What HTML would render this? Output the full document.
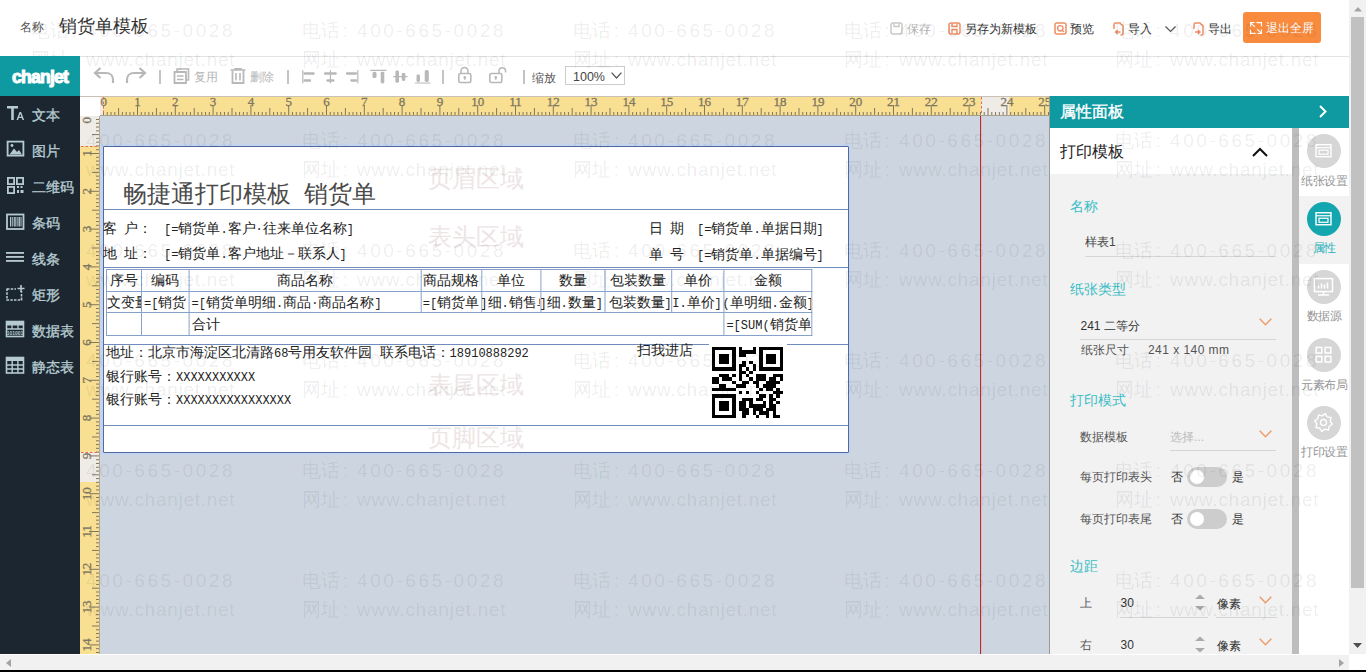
<!DOCTYPE html><html><head><meta charset="utf-8"><style>
*{margin:0;padding:0;box-sizing:border-box}
html,body{width:1366px;height:672px;overflow:hidden;background:#fff;font-family:"Liberation Sans",sans-serif}
.a{position:absolute}
.t{position:absolute;white-space:nowrap}
svg{position:absolute;display:block;overflow:visible}
.doc{font-family:"Liberation Sans",sans-serif}
.m{font-family:"Liberation Mono",monospace;font-size:12px;letter-spacing:0px}
.wm{z-index:5;position:absolute;white-space:nowrap;font-size:19px;line-height:20px;color:rgba(0,0,0,0.08);pointer-events:none;-webkit-text-stroke:0.6px rgba(0,0,0,0.035)}
.wd{letter-spacing:2.55px}.ww{letter-spacing:0.73px}
</style></head><body>
<div class="t" style="left:20px;top:19.0px;font-size:12px;line-height:16px;color:#555;">名称</div>
<div class="t" style="left:59px;top:14.0px;font-size:18px;line-height:24px;color:#333;">销货单模板</div>
<div class="a" style="left:80px;top:56px;width:1269px;height:1px;background:#e3e3e3"></div>
<svg style="left:889.5px;top:22px" width="13" height="13" viewBox="0 0 13 13"><rect x="1" y="1" width="11" height="11" rx="2" fill="none" stroke="#c8c8c8" stroke-width="1.5"/><path d="M4,1.5v3h5v-3" fill="none" stroke="#c8c8c8" stroke-width="1.4"/></svg>
<div class="t" style="left:906.5px;top:20.5px;font-size:12px;line-height:16px;color:#b9b9b9;">保存</div>
<svg style="left:947.5px;top:22px" width="13" height="13" viewBox="0 0 13 13"><rect x="1" y="1" width="11" height="11" rx="2" fill="none" stroke="#ee8f66" stroke-width="1.5"/><path d="M4,1.5v3h5v-3M4,11.5v-4h5v4" fill="none" stroke="#ee8f66" stroke-width="1.4"/></svg>
<div class="t" style="left:964.5px;top:20.5px;font-size:12px;line-height:16px;color:#333;">另存为新模板</div>
<svg style="left:1053.5px;top:22px" width="13" height="13" viewBox="0 0 13 13"><rect x="1" y="1" width="11" height="11" rx="2" fill="none" stroke="#ee8f66" stroke-width="1.5"/><circle cx="6.3" cy="6.3" r="2.7" fill="none" stroke="#ee8f66" stroke-width="1.4"/><path d="M8.2,8.2l1.8,1.8" stroke="#ee8f66" stroke-width="1.4"/></svg>
<div class="t" style="left:1070px;top:20.5px;font-size:12px;line-height:16px;color:#333;">预览</div>
<svg style="left:1111.5px;top:21.5px" width="13" height="14" viewBox="0 0 13 14"><path d="M2,7v-4.5a1.5,1.5 0 0 1 1.5,-1.5h4.5l3,3v7.5a1.5,1.5 0 0 1 -1.5,1.5h-1" fill="none" stroke="#ee8f66" stroke-width="1.5"/><path d="M8.5,10h-5M5.5,8l-2,2l2,2" fill="none" stroke="#ee8f66" stroke-width="1.4"/></svg>
<div class="t" style="left:1128px;top:20.5px;font-size:12px;line-height:16px;color:#333;">导入</div>
<svg style="left:1165px;top:26px" width="11" height="6" viewBox="0 0 11 6"><path d="M0.5,0.5l5,5l5,-5" fill="none" stroke="#555" stroke-width="1.2"/></svg>
<svg style="left:1191.5px;top:21.5px" width="13" height="14" viewBox="0 0 13 14"><path d="M2,7v-4.5a1.5,1.5 0 0 1 1.5,-1.5h4.5l3,3v7.5a1.5,1.5 0 0 1 -1.5,1.5h-1" fill="none" stroke="#ee8f66" stroke-width="1.5"/><path d="M3,10h5M6,8l2,2l-2,2" fill="none" stroke="#ee8f66" stroke-width="1.4"/></svg>
<div class="t" style="left:1208px;top:20.5px;font-size:12px;line-height:16px;color:#333;">导出</div>
<div class="a" style="left:1243px;top:12px;width:78px;height:31px;background:#f98b3e;border-radius:3px"></div>
<svg style="left:1250px;top:22px" width="12" height="12" viewBox="0 0 12 12"><path d="M0.6,4.5v-4h4M11.4,7.5v4h-4M0.8,0.8l4,4M11.2,11.2l-4,-4M6.5,0.6h5v4M5.5,11.4h-5v-4" fill="none" stroke="#fff" stroke-width="1.2"/></svg>
<div class="t" style="left:1265.5px;top:20.0px;font-size:12px;line-height:16px;color:#fff;">退出全屏</div>
<div class="a" style="left:1349px;top:0;width:17px;height:654px;background:#f1f1f1"></div>
<div class="a" style="left:1351px;top:17px;width:13px;height:571px;background:#c1c1c1"></div>
<svg style="left:1353.5px;top:6.5px" width="8" height="5" viewBox="0 0 8 5"><path d="M0,4.5L4,0L8,4.5z" fill="#a3a3a3"/></svg>
<svg style="left:1353px;top:643px" width="9" height="5" viewBox="0 0 9 5"><path d="M0,0L4.5,5L9,0z" fill="#505050"/></svg>
<div class="a" style="left:0;top:654px;width:1349px;height:18px;background:#f1f1f1;border-top:1px solid #fff"></div>
<div class="a" style="left:1349px;top:654px;width:17px;height:18px;background:#fff"></div>
<svg style="left:6px;top:659px" width="5" height="8" viewBox="0 0 5 8"><path d="M5,0L0,4L5,8z" fill="#a3a3a3"/></svg>
<svg style="left:1339px;top:659px" width="5" height="8" viewBox="0 0 5 8"><path d="M0,0L5,4L0,8z" fill="#a3a3a3"/></svg>
<div class="a" style="left:0;top:670px;width:1366px;height:2px;background:#000"></div>
<div class="a" style="left:0;top:56px;width:80px;height:40px;background:#0f99a1;z-index:10"></div>
<div class="t" style="left:11.5px;top:66px;font-size:22px;line-height:26px;color:#fff;font-weight:bold;letter-spacing:-1px;-webkit-text-stroke:1.3px #fff;transform:scale(0.8,0.86);transform-origin:0 0;z-index:11">chanjet</div>
<svg style="left:93px;top:67px" width="22" height="17" viewBox="0 0 22 17"><path d="M20,16v-3.5c0,-4 -3,-6.5 -7,-6.5h-10.5" fill="none" stroke="#b8b8b8" stroke-width="2.2"/><path d="M7.5,1l-5.5,5l5.5,5" fill="none" stroke="#b8b8b8" stroke-width="2.2"/></svg>
<svg style="left:125px;top:67px" width="22" height="17" viewBox="0 0 22 17"><path d="M2,16v-3.5c0,-4 3,-6.5 7,-6.5h10.5" fill="none" stroke="#b8b8b8" stroke-width="2.2"/><path d="M14.5,1l5.5,5l-5.5,5" fill="none" stroke="#b8b8b8" stroke-width="2.2"/></svg>
<div class="a" style="left:159px;top:70px;width:2px;height:14px;background:#c4c4c4"></div>
<svg style="left:173px;top:68px" width="17" height="16" viewBox="0 0 17 16"><path d="M4,3.2v-2.2h11.5v11h-2.5" fill="none" stroke="#b8b8b8" stroke-width="1.6"/><path d="M1.5,4h11.5v11h-11.5z" fill="none" stroke="#b8b8b8" stroke-width="1.8"/><path d="M4,8h6.5M4,11.5h6.5" stroke="#b8b8b8" stroke-width="1.6"/></svg>
<div class="t" style="left:194px;top:68.5px;font-size:12px;line-height:16px;color:#b5b5b5;">复用</div>
<svg style="left:230px;top:68px" width="16" height="16" viewBox="0 0 16 16"><path d="M0.5,2h15M5,2v-1.2h6v1.2" fill="none" stroke="#b8b8b8" stroke-width="1.6"/><path d="M2.5,2.5v12.5h11v-12.5" fill="none" stroke="#b8b8b8" stroke-width="1.8"/><path d="M6,5v7.5M10,5v7.5" stroke="#b8b8b8" stroke-width="1.6"/></svg>
<div class="t" style="left:250px;top:68.5px;font-size:12px;line-height:16px;color:#b5b5b5;">删除</div>
<div class="a" style="left:287px;top:70px;width:2px;height:14px;background:#c4c4c4"></div>
<svg style="left:300px;top:68px" width="140" height="18" viewBox="300 68 140 18"><rect x="302.2" y="70" width="1.2" height="13.5" rx="0.48" fill="#b8b8b8"/><rect x="303.5" y="72.2" width="11.2" height="2.6" rx="1.04" fill="#b8b8b8"/><rect x="303.5" y="79.2" width="7.6" height="2.6" rx="1.04" fill="#b8b8b8"/><rect x="329.8" y="70" width="1.2" height="13.5" rx="0.48" fill="#b8b8b8"/><rect x="324" y="72.2" width="12.8" height="2.6" rx="1.04" fill="#b8b8b8"/><rect x="326.3" y="79.2" width="8.2" height="2.6" rx="1.04" fill="#b8b8b8"/><rect x="357.2" y="70" width="1.2" height="13.5" rx="0.48" fill="#b8b8b8"/><rect x="346" y="72.2" width="11" height="2.6" rx="1.04" fill="#b8b8b8"/><rect x="350.3" y="79.2" width="6.8" height="2.6" rx="1.04" fill="#b8b8b8"/><rect x="370" y="69.8" width="16.6" height="1.2" rx="0.48" fill="#b8b8b8"/><rect x="372.5" y="71.8" width="4" height="6.2" rx="1.60" fill="#b8b8b8"/><rect x="380.7" y="71.8" width="3.6" height="11.6" rx="1.44" fill="#b8b8b8"/><rect x="393" y="76" width="14.7" height="1.2" rx="0.48" fill="#b8b8b8"/><rect x="395.4" y="70.5" width="3.6" height="12.3" rx="1.44" fill="#b8b8b8"/><rect x="401.8" y="72.9" width="3.5" height="8.1" rx="1.40" fill="#b8b8b8"/><rect x="414.7" y="82.4" width="15.8" height="1.2" rx="0.48" fill="#b8b8b8"/><rect x="416.5" y="74.6" width="3.5" height="7.4" rx="1.40" fill="#b8b8b8"/><rect x="424.7" y="70" width="4.1" height="12" rx="1.64" fill="#b8b8b8"/></svg>
<div class="a" style="left:442px;top:70px;width:2px;height:14px;background:#c4c4c4"></div>
<svg style="left:457px;top:67px" width="17" height="17" viewBox="0 0 17 17"><path d="M4,6.5v-2.5a3.5,3.5 0 0 1 7,0v2.5" fill="none" stroke="#b8b8b8" stroke-width="1.5"/><rect x="1.8" y="6.5" width="12" height="9" rx="1.5" fill="none" stroke="#b8b8b8" stroke-width="1.6"/><circle cx="7.8" cy="10.3" r="1.3" fill="#b8b8b8"/><rect x="7.1" y="10.3" width="1.4" height="2.5" fill="#b8b8b8"/></svg>
<svg style="left:488px;top:67px" width="20" height="17" viewBox="0 0 20 17"><path d="M11,6.5v-2.5a3.3,3.3 0 0 1 6.6,0v1.5" fill="none" stroke="#b8b8b8" stroke-width="1.5"/><rect x="1.8" y="6.5" width="12" height="9" rx="1.5" fill="none" stroke="#b8b8b8" stroke-width="1.6"/><circle cx="7.8" cy="10.3" r="1.3" fill="#b8b8b8"/><rect x="7.1" y="10.3" width="1.4" height="2.5" fill="#b8b8b8"/></svg>
<div class="a" style="left:523px;top:70px;width:2px;height:14px;background:#c4c4c4"></div>
<div class="t" style="left:531.5px;top:69.5px;font-size:12px;line-height:16px;color:#555;">缩放</div>
<div class="a" style="left:565px;top:66px;width:60px;height:19px;border:1px solid #ccc;background:#fff"></div>
<div class="t" style="left:573px;top:69.3px;font-size:12px;line-height:16px;color:#444;font-size:12.5px">100%</div>
<svg style="left:611px;top:72px" width="11" height="7" viewBox="0 0 11 7"><path d="M0.6,0.6l4.9,5.4l4.9,-5.4" fill="none" stroke="#555" stroke-width="1.3"/></svg>
<div class="a" style="left:0;top:0;width:0;height:0;z-index:10">
<div class="a" style="left:0;top:96px;width:80px;height:558px;background:#1b2631"></div>
<div class="t" style="left:32px;top:106.0px;font-size:14px;line-height:18px;color:#b6cbd0;-webkit-text-stroke:0.35px #b6cbd0">文本</div>
<div class="t" style="left:32px;top:142.0px;font-size:14px;line-height:18px;color:#b6cbd0;-webkit-text-stroke:0.35px #b6cbd0">图片</div>
<div class="t" style="left:32px;top:178.0px;font-size:14px;line-height:18px;color:#b6cbd0;-webkit-text-stroke:0.35px #b6cbd0">二维码</div>
<div class="t" style="left:32px;top:214.0px;font-size:14px;line-height:18px;color:#b6cbd0;-webkit-text-stroke:0.35px #b6cbd0">条码</div>
<div class="t" style="left:32px;top:250.0px;font-size:14px;line-height:18px;color:#b6cbd0;-webkit-text-stroke:0.35px #b6cbd0">线条</div>
<div class="t" style="left:32px;top:286.0px;font-size:14px;line-height:18px;color:#b6cbd0;-webkit-text-stroke:0.35px #b6cbd0">矩形</div>
<div class="t" style="left:32px;top:322.0px;font-size:14px;line-height:18px;color:#b6cbd0;-webkit-text-stroke:0.35px #b6cbd0">数据表</div>
<div class="t" style="left:32px;top:358.0px;font-size:14px;line-height:18px;color:#b6cbd0;-webkit-text-stroke:0.35px #b6cbd0">静态表</div>
<svg style="left:0;top:0" width="30" height="400" viewBox="0 0 30 400"><path d="M7,106h11v2.6h-4.2v11.4h-2.6v-11.4h-4.2z" fill="#b6cbd0"/><path d="M16.5,120l3,-8h1.6l3,8h-1.6l-0.7,-2h-3l-0.7,2z M19.2,116.7h2.2l-1.1,-3z" fill="#b6cbd0" fill-rule="evenodd"/><rect x="7.6" y="141.6" width="15.8" height="14" fill="none" stroke="#b6cbd0" stroke-width="1.8"/><path d="M9.5,154.5l4.5,-6l3,3.5l2,-2l3,4.5z" fill="#b6cbd0"/><circle cx="12" cy="145.5" r="1.4" fill="#b6cbd0"/><rect x="7.9" y="177.9" width="6.2" height="6.2" fill="none" stroke="#b6cbd0" stroke-width="1.8"/><rect x="16.9" y="177.9" width="6.2" height="6.2" fill="none" stroke="#b6cbd0" stroke-width="1.8"/><rect x="7.9" y="186.9" width="6.2" height="6.2" fill="none" stroke="#b6cbd0" stroke-width="1.8"/><rect x="17" y="186" width="2" height="2" fill="#b6cbd0"/><rect x="20.5" y="186" width="2" height="2" fill="#b6cbd0"/><rect x="17" y="190" width="2" height="3" fill="#b6cbd0"/><rect x="20.5" y="190" width="3" height="3" fill="#b6cbd0"/><rect x="7" y="214.5" width="16.5" height="14.5" fill="none" stroke="#b6cbd0" stroke-width="1.8"/><rect x="10" y="217" width="1.3" height="9.5" fill="#b6cbd0"/><rect x="12.3" y="217" width="1" height="9.5" fill="#b6cbd0"/><rect x="14.2" y="217" width="1.5" height="9.5" fill="#b6cbd0"/><rect x="16.6" y="217" width="1" height="9.5" fill="#b6cbd0"/><rect x="18.5" y="217" width="1.4" height="9.5" fill="#b6cbd0"/><rect x="20.5" y="217" width="1" height="9.5" fill="#b6cbd0"/><rect x="6" y="252" width="18" height="1.8" fill="#b6cbd0"/><rect x="6" y="256" width="18" height="1.8" fill="#b6cbd0"/><rect x="6" y="260" width="18" height="1.8" fill="#b6cbd0"/><path d="M7,288.5v11.5h14.5v-9" fill="none" stroke="#b6cbd0" stroke-width="1.6" stroke-dasharray="2.5,1.2"/><path d="M7,289h9" fill="none" stroke="#b6cbd0" stroke-width="1.6" stroke-dasharray="2.5,1.2"/><path d="M21,285v7M17.5,288.5h7" stroke="#b6cbd0" stroke-width="1.6"/><rect x="6.5" y="321.5" width="17" height="15" fill="none" stroke="#b6cbd0" stroke-width="1.6"/><rect x="6.5" y="321.5" width="17" height="4" fill="#b6cbd0"/><path d="M6.5,329h17M12,325v4M18,325v4" stroke="#b6cbd0" stroke-width="1.3"/><text x="15" y="335.3" font-size="5" font-family="Liberation Sans" fill="#b6cbd0" text-anchor="middle" font-weight="bold">101001</text><rect x="6.5" y="357.5" width="17" height="15.5" fill="none" stroke="#b6cbd0" stroke-width="1.6"/><rect x="6.5" y="357.5" width="17" height="3.5" fill="#b6cbd0"/><path d="M6.5,365h17M6.5,369h17M12.2,361v12M17.9,361v12" stroke="#b6cbd0" stroke-width="1.4"/></svg>
</div>
<div class="a" style="left:100px;top:116px;width:949px;height:538px;background:#cdd6e0"></div>
<svg width="969" height="20" style="position:absolute;left:80px;top:96px;display:block">
<rect x="0" y="0" width="969" height="20" fill="#fff"/>
<rect x="20" y="0" width="3" height="20" fill="#efebe6"/>
<rect x="23" y="0" width="878" height="20" fill="#f9df92"/>
<rect x="901" y="0" width="28" height="20" fill="#efebe6"/>
<rect x="929" y="0" width="40" height="20" fill="#f9df92"/>
<rect x="0" y="0" width="969" height="1" fill="#c9c2b4"/>
<rect x="20" y="19" width="949" height="1" fill="#a89f89"/>
<rect x="19.20" y="19" width="1" height="0" fill="#80775f"/>
<text x="23.70" y="10" font-family="Liberation Serif" font-size="13" fill="#80775f" stroke="#80775f" stroke-width="0.3" text-anchor="middle">0</text>
<rect x="22.98" y="16" width="1" height="3" fill="#80775f"/>
<rect x="26.76" y="16" width="1" height="3" fill="#80775f"/>
<rect x="30.54" y="16" width="1" height="3" fill="#80775f"/>
<rect x="34.32" y="16" width="1" height="3" fill="#80775f"/>
<rect x="38.10" y="12" width="1" height="7" fill="#80775f"/>
<rect x="41.88" y="16" width="1" height="3" fill="#80775f"/>
<rect x="45.66" y="16" width="1" height="3" fill="#80775f"/>
<rect x="49.44" y="16" width="1" height="3" fill="#80775f"/>
<rect x="53.22" y="16" width="1" height="3" fill="#80775f"/>
<rect x="57.00" y="9" width="1" height="10" fill="#80775f"/>
<text x="57.50" y="10" font-family="Liberation Serif" font-size="13" fill="#80775f" stroke="#80775f" stroke-width="0.3" text-anchor="middle">1</text>
<rect x="60.78" y="16" width="1" height="3" fill="#80775f"/>
<rect x="64.56" y="16" width="1" height="3" fill="#80775f"/>
<rect x="68.34" y="16" width="1" height="3" fill="#80775f"/>
<rect x="72.12" y="16" width="1" height="3" fill="#80775f"/>
<rect x="75.90" y="12" width="1" height="7" fill="#80775f"/>
<rect x="79.68" y="16" width="1" height="3" fill="#80775f"/>
<rect x="83.46" y="16" width="1" height="3" fill="#80775f"/>
<rect x="87.24" y="16" width="1" height="3" fill="#80775f"/>
<rect x="91.02" y="16" width="1" height="3" fill="#80775f"/>
<rect x="94.80" y="9" width="1" height="10" fill="#80775f"/>
<text x="95.30" y="10" font-family="Liberation Serif" font-size="13" fill="#80775f" stroke="#80775f" stroke-width="0.3" text-anchor="middle">2</text>
<rect x="98.58" y="16" width="1" height="3" fill="#80775f"/>
<rect x="102.36" y="16" width="1" height="3" fill="#80775f"/>
<rect x="106.14" y="16" width="1" height="3" fill="#80775f"/>
<rect x="109.92" y="16" width="1" height="3" fill="#80775f"/>
<rect x="113.70" y="12" width="1" height="7" fill="#80775f"/>
<rect x="117.48" y="16" width="1" height="3" fill="#80775f"/>
<rect x="121.26" y="16" width="1" height="3" fill="#80775f"/>
<rect x="125.04" y="16" width="1" height="3" fill="#80775f"/>
<rect x="128.82" y="16" width="1" height="3" fill="#80775f"/>
<rect x="132.60" y="9" width="1" height="10" fill="#80775f"/>
<text x="133.10" y="10" font-family="Liberation Serif" font-size="13" fill="#80775f" stroke="#80775f" stroke-width="0.3" text-anchor="middle">3</text>
<rect x="136.38" y="16" width="1" height="3" fill="#80775f"/>
<rect x="140.16" y="16" width="1" height="3" fill="#80775f"/>
<rect x="143.94" y="16" width="1" height="3" fill="#80775f"/>
<rect x="147.72" y="16" width="1" height="3" fill="#80775f"/>
<rect x="151.50" y="12" width="1" height="7" fill="#80775f"/>
<rect x="155.28" y="16" width="1" height="3" fill="#80775f"/>
<rect x="159.06" y="16" width="1" height="3" fill="#80775f"/>
<rect x="162.84" y="16" width="1" height="3" fill="#80775f"/>
<rect x="166.62" y="16" width="1" height="3" fill="#80775f"/>
<rect x="170.40" y="9" width="1" height="10" fill="#80775f"/>
<text x="170.90" y="10" font-family="Liberation Serif" font-size="13" fill="#80775f" stroke="#80775f" stroke-width="0.3" text-anchor="middle">4</text>
<rect x="174.18" y="16" width="1" height="3" fill="#80775f"/>
<rect x="177.96" y="16" width="1" height="3" fill="#80775f"/>
<rect x="181.74" y="16" width="1" height="3" fill="#80775f"/>
<rect x="185.52" y="16" width="1" height="3" fill="#80775f"/>
<rect x="189.30" y="12" width="1" height="7" fill="#80775f"/>
<rect x="193.08" y="16" width="1" height="3" fill="#80775f"/>
<rect x="196.86" y="16" width="1" height="3" fill="#80775f"/>
<rect x="200.64" y="16" width="1" height="3" fill="#80775f"/>
<rect x="204.42" y="16" width="1" height="3" fill="#80775f"/>
<rect x="208.20" y="9" width="1" height="10" fill="#80775f"/>
<text x="208.70" y="10" font-family="Liberation Serif" font-size="13" fill="#80775f" stroke="#80775f" stroke-width="0.3" text-anchor="middle">5</text>
<rect x="211.98" y="16" width="1" height="3" fill="#80775f"/>
<rect x="215.76" y="16" width="1" height="3" fill="#80775f"/>
<rect x="219.54" y="16" width="1" height="3" fill="#80775f"/>
<rect x="223.32" y="16" width="1" height="3" fill="#80775f"/>
<rect x="227.10" y="12" width="1" height="7" fill="#80775f"/>
<rect x="230.88" y="16" width="1" height="3" fill="#80775f"/>
<rect x="234.66" y="16" width="1" height="3" fill="#80775f"/>
<rect x="238.44" y="16" width="1" height="3" fill="#80775f"/>
<rect x="242.22" y="16" width="1" height="3" fill="#80775f"/>
<rect x="246.00" y="9" width="1" height="10" fill="#80775f"/>
<text x="246.50" y="10" font-family="Liberation Serif" font-size="13" fill="#80775f" stroke="#80775f" stroke-width="0.3" text-anchor="middle">6</text>
<rect x="249.78" y="16" width="1" height="3" fill="#80775f"/>
<rect x="253.56" y="16" width="1" height="3" fill="#80775f"/>
<rect x="257.34" y="16" width="1" height="3" fill="#80775f"/>
<rect x="261.12" y="16" width="1" height="3" fill="#80775f"/>
<rect x="264.90" y="12" width="1" height="7" fill="#80775f"/>
<rect x="268.68" y="16" width="1" height="3" fill="#80775f"/>
<rect x="272.46" y="16" width="1" height="3" fill="#80775f"/>
<rect x="276.24" y="16" width="1" height="3" fill="#80775f"/>
<rect x="280.02" y="16" width="1" height="3" fill="#80775f"/>
<rect x="283.80" y="9" width="1" height="10" fill="#80775f"/>
<text x="284.30" y="10" font-family="Liberation Serif" font-size="13" fill="#80775f" stroke="#80775f" stroke-width="0.3" text-anchor="middle">7</text>
<rect x="287.58" y="16" width="1" height="3" fill="#80775f"/>
<rect x="291.36" y="16" width="1" height="3" fill="#80775f"/>
<rect x="295.14" y="16" width="1" height="3" fill="#80775f"/>
<rect x="298.92" y="16" width="1" height="3" fill="#80775f"/>
<rect x="302.70" y="12" width="1" height="7" fill="#80775f"/>
<rect x="306.48" y="16" width="1" height="3" fill="#80775f"/>
<rect x="310.26" y="16" width="1" height="3" fill="#80775f"/>
<rect x="314.04" y="16" width="1" height="3" fill="#80775f"/>
<rect x="317.82" y="16" width="1" height="3" fill="#80775f"/>
<rect x="321.60" y="9" width="1" height="10" fill="#80775f"/>
<text x="322.10" y="10" font-family="Liberation Serif" font-size="13" fill="#80775f" stroke="#80775f" stroke-width="0.3" text-anchor="middle">8</text>
<rect x="325.38" y="16" width="1" height="3" fill="#80775f"/>
<rect x="329.16" y="16" width="1" height="3" fill="#80775f"/>
<rect x="332.94" y="16" width="1" height="3" fill="#80775f"/>
<rect x="336.72" y="16" width="1" height="3" fill="#80775f"/>
<rect x="340.50" y="12" width="1" height="7" fill="#80775f"/>
<rect x="344.28" y="16" width="1" height="3" fill="#80775f"/>
<rect x="348.06" y="16" width="1" height="3" fill="#80775f"/>
<rect x="351.84" y="16" width="1" height="3" fill="#80775f"/>
<rect x="355.62" y="16" width="1" height="3" fill="#80775f"/>
<rect x="359.40" y="9" width="1" height="10" fill="#80775f"/>
<text x="359.90" y="10" font-family="Liberation Serif" font-size="13" fill="#80775f" stroke="#80775f" stroke-width="0.3" text-anchor="middle">9</text>
<rect x="363.18" y="16" width="1" height="3" fill="#80775f"/>
<rect x="366.96" y="16" width="1" height="3" fill="#80775f"/>
<rect x="370.74" y="16" width="1" height="3" fill="#80775f"/>
<rect x="374.52" y="16" width="1" height="3" fill="#80775f"/>
<rect x="378.30" y="12" width="1" height="7" fill="#80775f"/>
<rect x="382.08" y="16" width="1" height="3" fill="#80775f"/>
<rect x="385.86" y="16" width="1" height="3" fill="#80775f"/>
<rect x="389.64" y="16" width="1" height="3" fill="#80775f"/>
<rect x="393.42" y="16" width="1" height="3" fill="#80775f"/>
<rect x="397.20" y="9" width="1" height="10" fill="#80775f"/>
<text x="397.70" y="10" font-family="Liberation Serif" font-size="13" fill="#80775f" stroke="#80775f" stroke-width="0.3" text-anchor="middle">10</text>
<rect x="400.98" y="16" width="1" height="3" fill="#80775f"/>
<rect x="404.76" y="16" width="1" height="3" fill="#80775f"/>
<rect x="408.54" y="16" width="1" height="3" fill="#80775f"/>
<rect x="412.32" y="16" width="1" height="3" fill="#80775f"/>
<rect x="416.10" y="12" width="1" height="7" fill="#80775f"/>
<rect x="419.88" y="16" width="1" height="3" fill="#80775f"/>
<rect x="423.66" y="16" width="1" height="3" fill="#80775f"/>
<rect x="427.44" y="16" width="1" height="3" fill="#80775f"/>
<rect x="431.22" y="16" width="1" height="3" fill="#80775f"/>
<rect x="435.00" y="9" width="1" height="10" fill="#80775f"/>
<text x="435.50" y="10" font-family="Liberation Serif" font-size="13" fill="#80775f" stroke="#80775f" stroke-width="0.3" text-anchor="middle">11</text>
<rect x="438.78" y="16" width="1" height="3" fill="#80775f"/>
<rect x="442.56" y="16" width="1" height="3" fill="#80775f"/>
<rect x="446.34" y="16" width="1" height="3" fill="#80775f"/>
<rect x="450.12" y="16" width="1" height="3" fill="#80775f"/>
<rect x="453.90" y="12" width="1" height="7" fill="#80775f"/>
<rect x="457.68" y="16" width="1" height="3" fill="#80775f"/>
<rect x="461.46" y="16" width="1" height="3" fill="#80775f"/>
<rect x="465.24" y="16" width="1" height="3" fill="#80775f"/>
<rect x="469.02" y="16" width="1" height="3" fill="#80775f"/>
<rect x="472.80" y="9" width="1" height="10" fill="#80775f"/>
<text x="473.30" y="10" font-family="Liberation Serif" font-size="13" fill="#80775f" stroke="#80775f" stroke-width="0.3" text-anchor="middle">12</text>
<rect x="476.58" y="16" width="1" height="3" fill="#80775f"/>
<rect x="480.36" y="16" width="1" height="3" fill="#80775f"/>
<rect x="484.14" y="16" width="1" height="3" fill="#80775f"/>
<rect x="487.92" y="16" width="1" height="3" fill="#80775f"/>
<rect x="491.70" y="12" width="1" height="7" fill="#80775f"/>
<rect x="495.48" y="16" width="1" height="3" fill="#80775f"/>
<rect x="499.26" y="16" width="1" height="3" fill="#80775f"/>
<rect x="503.04" y="16" width="1" height="3" fill="#80775f"/>
<rect x="506.82" y="16" width="1" height="3" fill="#80775f"/>
<rect x="510.60" y="9" width="1" height="10" fill="#80775f"/>
<text x="511.10" y="10" font-family="Liberation Serif" font-size="13" fill="#80775f" stroke="#80775f" stroke-width="0.3" text-anchor="middle">13</text>
<rect x="514.38" y="16" width="1" height="3" fill="#80775f"/>
<rect x="518.16" y="16" width="1" height="3" fill="#80775f"/>
<rect x="521.94" y="16" width="1" height="3" fill="#80775f"/>
<rect x="525.72" y="16" width="1" height="3" fill="#80775f"/>
<rect x="529.50" y="12" width="1" height="7" fill="#80775f"/>
<rect x="533.28" y="16" width="1" height="3" fill="#80775f"/>
<rect x="537.06" y="16" width="1" height="3" fill="#80775f"/>
<rect x="540.84" y="16" width="1" height="3" fill="#80775f"/>
<rect x="544.62" y="16" width="1" height="3" fill="#80775f"/>
<rect x="548.40" y="9" width="1" height="10" fill="#80775f"/>
<text x="548.90" y="10" font-family="Liberation Serif" font-size="13" fill="#80775f" stroke="#80775f" stroke-width="0.3" text-anchor="middle">14</text>
<rect x="552.18" y="16" width="1" height="3" fill="#80775f"/>
<rect x="555.96" y="16" width="1" height="3" fill="#80775f"/>
<rect x="559.74" y="16" width="1" height="3" fill="#80775f"/>
<rect x="563.52" y="16" width="1" height="3" fill="#80775f"/>
<rect x="567.30" y="12" width="1" height="7" fill="#80775f"/>
<rect x="571.08" y="16" width="1" height="3" fill="#80775f"/>
<rect x="574.86" y="16" width="1" height="3" fill="#80775f"/>
<rect x="578.64" y="16" width="1" height="3" fill="#80775f"/>
<rect x="582.42" y="16" width="1" height="3" fill="#80775f"/>
<rect x="586.20" y="9" width="1" height="10" fill="#80775f"/>
<text x="586.70" y="10" font-family="Liberation Serif" font-size="13" fill="#80775f" stroke="#80775f" stroke-width="0.3" text-anchor="middle">15</text>
<rect x="589.98" y="16" width="1" height="3" fill="#80775f"/>
<rect x="593.76" y="16" width="1" height="3" fill="#80775f"/>
<rect x="597.54" y="16" width="1" height="3" fill="#80775f"/>
<rect x="601.32" y="16" width="1" height="3" fill="#80775f"/>
<rect x="605.10" y="12" width="1" height="7" fill="#80775f"/>
<rect x="608.88" y="16" width="1" height="3" fill="#80775f"/>
<rect x="612.66" y="16" width="1" height="3" fill="#80775f"/>
<rect x="616.44" y="16" width="1" height="3" fill="#80775f"/>
<rect x="620.22" y="16" width="1" height="3" fill="#80775f"/>
<rect x="624.00" y="9" width="1" height="10" fill="#80775f"/>
<text x="624.50" y="10" font-family="Liberation Serif" font-size="13" fill="#80775f" stroke="#80775f" stroke-width="0.3" text-anchor="middle">16</text>
<rect x="627.78" y="16" width="1" height="3" fill="#80775f"/>
<rect x="631.56" y="16" width="1" height="3" fill="#80775f"/>
<rect x="635.34" y="16" width="1" height="3" fill="#80775f"/>
<rect x="639.12" y="16" width="1" height="3" fill="#80775f"/>
<rect x="642.90" y="12" width="1" height="7" fill="#80775f"/>
<rect x="646.68" y="16" width="1" height="3" fill="#80775f"/>
<rect x="650.46" y="16" width="1" height="3" fill="#80775f"/>
<rect x="654.24" y="16" width="1" height="3" fill="#80775f"/>
<rect x="658.02" y="16" width="1" height="3" fill="#80775f"/>
<rect x="661.80" y="9" width="1" height="10" fill="#80775f"/>
<text x="662.30" y="10" font-family="Liberation Serif" font-size="13" fill="#80775f" stroke="#80775f" stroke-width="0.3" text-anchor="middle">17</text>
<rect x="665.58" y="16" width="1" height="3" fill="#80775f"/>
<rect x="669.36" y="16" width="1" height="3" fill="#80775f"/>
<rect x="673.14" y="16" width="1" height="3" fill="#80775f"/>
<rect x="676.92" y="16" width="1" height="3" fill="#80775f"/>
<rect x="680.70" y="12" width="1" height="7" fill="#80775f"/>
<rect x="684.48" y="16" width="1" height="3" fill="#80775f"/>
<rect x="688.26" y="16" width="1" height="3" fill="#80775f"/>
<rect x="692.04" y="16" width="1" height="3" fill="#80775f"/>
<rect x="695.82" y="16" width="1" height="3" fill="#80775f"/>
<rect x="699.60" y="9" width="1" height="10" fill="#80775f"/>
<text x="700.10" y="10" font-family="Liberation Serif" font-size="13" fill="#80775f" stroke="#80775f" stroke-width="0.3" text-anchor="middle">18</text>
<rect x="703.38" y="16" width="1" height="3" fill="#80775f"/>
<rect x="707.16" y="16" width="1" height="3" fill="#80775f"/>
<rect x="710.94" y="16" width="1" height="3" fill="#80775f"/>
<rect x="714.72" y="16" width="1" height="3" fill="#80775f"/>
<rect x="718.50" y="12" width="1" height="7" fill="#80775f"/>
<rect x="722.28" y="16" width="1" height="3" fill="#80775f"/>
<rect x="726.06" y="16" width="1" height="3" fill="#80775f"/>
<rect x="729.84" y="16" width="1" height="3" fill="#80775f"/>
<rect x="733.62" y="16" width="1" height="3" fill="#80775f"/>
<rect x="737.40" y="9" width="1" height="10" fill="#80775f"/>
<text x="737.90" y="10" font-family="Liberation Serif" font-size="13" fill="#80775f" stroke="#80775f" stroke-width="0.3" text-anchor="middle">19</text>
<rect x="741.18" y="16" width="1" height="3" fill="#80775f"/>
<rect x="744.96" y="16" width="1" height="3" fill="#80775f"/>
<rect x="748.74" y="16" width="1" height="3" fill="#80775f"/>
<rect x="752.52" y="16" width="1" height="3" fill="#80775f"/>
<rect x="756.30" y="12" width="1" height="7" fill="#80775f"/>
<rect x="760.08" y="16" width="1" height="3" fill="#80775f"/>
<rect x="763.86" y="16" width="1" height="3" fill="#80775f"/>
<rect x="767.64" y="16" width="1" height="3" fill="#80775f"/>
<rect x="771.42" y="16" width="1" height="3" fill="#80775f"/>
<rect x="775.20" y="9" width="1" height="10" fill="#80775f"/>
<text x="775.70" y="10" font-family="Liberation Serif" font-size="13" fill="#80775f" stroke="#80775f" stroke-width="0.3" text-anchor="middle">20</text>
<rect x="778.98" y="16" width="1" height="3" fill="#80775f"/>
<rect x="782.76" y="16" width="1" height="3" fill="#80775f"/>
<rect x="786.54" y="16" width="1" height="3" fill="#80775f"/>
<rect x="790.32" y="16" width="1" height="3" fill="#80775f"/>
<rect x="794.10" y="12" width="1" height="7" fill="#80775f"/>
<rect x="797.88" y="16" width="1" height="3" fill="#80775f"/>
<rect x="801.66" y="16" width="1" height="3" fill="#80775f"/>
<rect x="805.44" y="16" width="1" height="3" fill="#80775f"/>
<rect x="809.22" y="16" width="1" height="3" fill="#80775f"/>
<rect x="813.00" y="9" width="1" height="10" fill="#80775f"/>
<text x="813.50" y="10" font-family="Liberation Serif" font-size="13" fill="#80775f" stroke="#80775f" stroke-width="0.3" text-anchor="middle">21</text>
<rect x="816.78" y="16" width="1" height="3" fill="#80775f"/>
<rect x="820.56" y="16" width="1" height="3" fill="#80775f"/>
<rect x="824.34" y="16" width="1" height="3" fill="#80775f"/>
<rect x="828.12" y="16" width="1" height="3" fill="#80775f"/>
<rect x="831.90" y="12" width="1" height="7" fill="#80775f"/>
<rect x="835.68" y="16" width="1" height="3" fill="#80775f"/>
<rect x="839.46" y="16" width="1" height="3" fill="#80775f"/>
<rect x="843.24" y="16" width="1" height="3" fill="#80775f"/>
<rect x="847.02" y="16" width="1" height="3" fill="#80775f"/>
<rect x="850.80" y="9" width="1" height="10" fill="#80775f"/>
<text x="851.30" y="10" font-family="Liberation Serif" font-size="13" fill="#80775f" stroke="#80775f" stroke-width="0.3" text-anchor="middle">22</text>
<rect x="854.58" y="16" width="1" height="3" fill="#80775f"/>
<rect x="858.36" y="16" width="1" height="3" fill="#80775f"/>
<rect x="862.14" y="16" width="1" height="3" fill="#80775f"/>
<rect x="865.92" y="16" width="1" height="3" fill="#80775f"/>
<rect x="869.70" y="12" width="1" height="7" fill="#80775f"/>
<rect x="873.48" y="16" width="1" height="3" fill="#80775f"/>
<rect x="877.26" y="16" width="1" height="3" fill="#80775f"/>
<rect x="881.04" y="16" width="1" height="3" fill="#80775f"/>
<rect x="884.82" y="16" width="1" height="3" fill="#80775f"/>
<rect x="888.60" y="9" width="1" height="10" fill="#80775f"/>
<text x="889.10" y="10" font-family="Liberation Serif" font-size="13" fill="#80775f" stroke="#80775f" stroke-width="0.3" text-anchor="middle">23</text>
<rect x="892.38" y="16" width="1" height="3" fill="#80775f"/>
<rect x="896.16" y="16" width="1" height="3" fill="#80775f"/>
<rect x="899.94" y="16" width="1" height="3" fill="#80775f"/>
<rect x="903.72" y="16" width="1" height="3" fill="#80775f"/>
<rect x="907.50" y="12" width="1" height="7" fill="#80775f"/>
<rect x="911.28" y="16" width="1" height="3" fill="#80775f"/>
<rect x="915.06" y="16" width="1" height="3" fill="#80775f"/>
<rect x="918.84" y="16" width="1" height="3" fill="#80775f"/>
<rect x="922.62" y="16" width="1" height="3" fill="#80775f"/>
<rect x="926.40" y="9" width="1" height="10" fill="#80775f"/>
<text x="926.90" y="10" font-family="Liberation Serif" font-size="13" fill="#80775f" stroke="#80775f" stroke-width="0.3" text-anchor="middle">24</text>
<rect x="930.18" y="16" width="1" height="3" fill="#80775f"/>
<rect x="933.96" y="16" width="1" height="3" fill="#80775f"/>
<rect x="937.74" y="16" width="1" height="3" fill="#80775f"/>
<rect x="941.52" y="16" width="1" height="3" fill="#80775f"/>
<rect x="945.30" y="12" width="1" height="7" fill="#80775f"/>
<rect x="949.08" y="16" width="1" height="3" fill="#80775f"/>
<rect x="952.86" y="16" width="1" height="3" fill="#80775f"/>
<rect x="956.64" y="16" width="1" height="3" fill="#80775f"/>
<rect x="960.42" y="16" width="1" height="3" fill="#80775f"/>
<rect x="964.20" y="9" width="1" height="10" fill="#80775f"/>
<text x="964.70" y="10" font-family="Liberation Serif" font-size="13" fill="#80775f" stroke="#80775f" stroke-width="0.3" text-anchor="middle">25</text>
<rect x="967.98" y="16" width="1" height="3" fill="#80775f"/>
<line x1="23.5" y1="1" x2="23.5" y2="19" stroke="#e46a50" stroke-width="1" stroke-dasharray="2.5,2"/>
<line x1="901.5" y1="1" x2="901.5" y2="19" stroke="#e46a50" stroke-width="1" stroke-dasharray="2.5,2"/>
</svg>
<svg width="20" height="538" style="position:absolute;left:80px;top:116px;display:block">
<rect x="0" y="0" width="20" height="538" fill="#f9df92"/>
<rect x="0" y="0" width="20" height="30" fill="#efebe6"/>
<rect x="0" y="336" width="20" height="30" fill="#efebe6"/>
<rect x="19" y="0" width="1" height="538" fill="#b3aa94"/>
<rect x="19" y="-0.80" width="0" height="1" fill="#80775f"/>
<text x="0" y="0" transform="translate(6,4.20) rotate(-90)" font-family="Liberation Serif" font-size="13" fill="#80775f" stroke="#80775f" stroke-width="0.3" text-anchor="middle" dominant-baseline="central">0</text>
<rect x="16" y="2.98" width="3" height="1" fill="#80775f"/>
<rect x="16" y="6.76" width="3" height="1" fill="#80775f"/>
<rect x="16" y="10.54" width="3" height="1" fill="#80775f"/>
<rect x="16" y="14.32" width="3" height="1" fill="#80775f"/>
<rect x="12" y="18.10" width="7" height="1" fill="#80775f"/>
<rect x="16" y="21.88" width="3" height="1" fill="#80775f"/>
<rect x="16" y="25.66" width="3" height="1" fill="#80775f"/>
<rect x="16" y="29.44" width="3" height="1" fill="#80775f"/>
<rect x="16" y="33.22" width="3" height="1" fill="#80775f"/>
<rect x="9" y="37.00" width="10" height="1" fill="#80775f"/>
<text x="0" y="0" transform="translate(6,37.50) rotate(-90)" font-family="Liberation Serif" font-size="13" fill="#80775f" stroke="#80775f" stroke-width="0.3" text-anchor="middle" dominant-baseline="central">1</text>
<rect x="16" y="40.78" width="3" height="1" fill="#80775f"/>
<rect x="16" y="44.56" width="3" height="1" fill="#80775f"/>
<rect x="16" y="48.34" width="3" height="1" fill="#80775f"/>
<rect x="16" y="52.12" width="3" height="1" fill="#80775f"/>
<rect x="12" y="55.90" width="7" height="1" fill="#80775f"/>
<rect x="16" y="59.68" width="3" height="1" fill="#80775f"/>
<rect x="16" y="63.46" width="3" height="1" fill="#80775f"/>
<rect x="16" y="67.24" width="3" height="1" fill="#80775f"/>
<rect x="16" y="71.02" width="3" height="1" fill="#80775f"/>
<rect x="9" y="74.80" width="10" height="1" fill="#80775f"/>
<text x="0" y="0" transform="translate(6,75.30) rotate(-90)" font-family="Liberation Serif" font-size="13" fill="#80775f" stroke="#80775f" stroke-width="0.3" text-anchor="middle" dominant-baseline="central">2</text>
<rect x="16" y="78.58" width="3" height="1" fill="#80775f"/>
<rect x="16" y="82.36" width="3" height="1" fill="#80775f"/>
<rect x="16" y="86.14" width="3" height="1" fill="#80775f"/>
<rect x="16" y="89.92" width="3" height="1" fill="#80775f"/>
<rect x="12" y="93.70" width="7" height="1" fill="#80775f"/>
<rect x="16" y="97.48" width="3" height="1" fill="#80775f"/>
<rect x="16" y="101.26" width="3" height="1" fill="#80775f"/>
<rect x="16" y="105.04" width="3" height="1" fill="#80775f"/>
<rect x="16" y="108.82" width="3" height="1" fill="#80775f"/>
<rect x="9" y="112.60" width="10" height="1" fill="#80775f"/>
<text x="0" y="0" transform="translate(6,113.10) rotate(-90)" font-family="Liberation Serif" font-size="13" fill="#80775f" stroke="#80775f" stroke-width="0.3" text-anchor="middle" dominant-baseline="central">3</text>
<rect x="16" y="116.38" width="3" height="1" fill="#80775f"/>
<rect x="16" y="120.16" width="3" height="1" fill="#80775f"/>
<rect x="16" y="123.94" width="3" height="1" fill="#80775f"/>
<rect x="16" y="127.72" width="3" height="1" fill="#80775f"/>
<rect x="12" y="131.50" width="7" height="1" fill="#80775f"/>
<rect x="16" y="135.28" width="3" height="1" fill="#80775f"/>
<rect x="16" y="139.06" width="3" height="1" fill="#80775f"/>
<rect x="16" y="142.84" width="3" height="1" fill="#80775f"/>
<rect x="16" y="146.62" width="3" height="1" fill="#80775f"/>
<rect x="9" y="150.40" width="10" height="1" fill="#80775f"/>
<text x="0" y="0" transform="translate(6,150.90) rotate(-90)" font-family="Liberation Serif" font-size="13" fill="#80775f" stroke="#80775f" stroke-width="0.3" text-anchor="middle" dominant-baseline="central">4</text>
<rect x="16" y="154.18" width="3" height="1" fill="#80775f"/>
<rect x="16" y="157.96" width="3" height="1" fill="#80775f"/>
<rect x="16" y="161.74" width="3" height="1" fill="#80775f"/>
<rect x="16" y="165.52" width="3" height="1" fill="#80775f"/>
<rect x="12" y="169.30" width="7" height="1" fill="#80775f"/>
<rect x="16" y="173.08" width="3" height="1" fill="#80775f"/>
<rect x="16" y="176.86" width="3" height="1" fill="#80775f"/>
<rect x="16" y="180.64" width="3" height="1" fill="#80775f"/>
<rect x="16" y="184.42" width="3" height="1" fill="#80775f"/>
<rect x="9" y="188.20" width="10" height="1" fill="#80775f"/>
<text x="0" y="0" transform="translate(6,188.70) rotate(-90)" font-family="Liberation Serif" font-size="13" fill="#80775f" stroke="#80775f" stroke-width="0.3" text-anchor="middle" dominant-baseline="central">5</text>
<rect x="16" y="191.98" width="3" height="1" fill="#80775f"/>
<rect x="16" y="195.76" width="3" height="1" fill="#80775f"/>
<rect x="16" y="199.54" width="3" height="1" fill="#80775f"/>
<rect x="16" y="203.32" width="3" height="1" fill="#80775f"/>
<rect x="12" y="207.10" width="7" height="1" fill="#80775f"/>
<rect x="16" y="210.88" width="3" height="1" fill="#80775f"/>
<rect x="16" y="214.66" width="3" height="1" fill="#80775f"/>
<rect x="16" y="218.44" width="3" height="1" fill="#80775f"/>
<rect x="16" y="222.22" width="3" height="1" fill="#80775f"/>
<rect x="9" y="226.00" width="10" height="1" fill="#80775f"/>
<text x="0" y="0" transform="translate(6,226.50) rotate(-90)" font-family="Liberation Serif" font-size="13" fill="#80775f" stroke="#80775f" stroke-width="0.3" text-anchor="middle" dominant-baseline="central">6</text>
<rect x="16" y="229.78" width="3" height="1" fill="#80775f"/>
<rect x="16" y="233.56" width="3" height="1" fill="#80775f"/>
<rect x="16" y="237.34" width="3" height="1" fill="#80775f"/>
<rect x="16" y="241.12" width="3" height="1" fill="#80775f"/>
<rect x="12" y="244.90" width="7" height="1" fill="#80775f"/>
<rect x="16" y="248.68" width="3" height="1" fill="#80775f"/>
<rect x="16" y="252.46" width="3" height="1" fill="#80775f"/>
<rect x="16" y="256.24" width="3" height="1" fill="#80775f"/>
<rect x="16" y="260.02" width="3" height="1" fill="#80775f"/>
<rect x="9" y="263.80" width="10" height="1" fill="#80775f"/>
<text x="0" y="0" transform="translate(6,264.30) rotate(-90)" font-family="Liberation Serif" font-size="13" fill="#80775f" stroke="#80775f" stroke-width="0.3" text-anchor="middle" dominant-baseline="central">7</text>
<rect x="16" y="267.58" width="3" height="1" fill="#80775f"/>
<rect x="16" y="271.36" width="3" height="1" fill="#80775f"/>
<rect x="16" y="275.14" width="3" height="1" fill="#80775f"/>
<rect x="16" y="278.92" width="3" height="1" fill="#80775f"/>
<rect x="12" y="282.70" width="7" height="1" fill="#80775f"/>
<rect x="16" y="286.48" width="3" height="1" fill="#80775f"/>
<rect x="16" y="290.26" width="3" height="1" fill="#80775f"/>
<rect x="16" y="294.04" width="3" height="1" fill="#80775f"/>
<rect x="16" y="297.82" width="3" height="1" fill="#80775f"/>
<rect x="9" y="301.60" width="10" height="1" fill="#80775f"/>
<text x="0" y="0" transform="translate(6,302.10) rotate(-90)" font-family="Liberation Serif" font-size="13" fill="#80775f" stroke="#80775f" stroke-width="0.3" text-anchor="middle" dominant-baseline="central">8</text>
<rect x="16" y="305.38" width="3" height="1" fill="#80775f"/>
<rect x="16" y="309.16" width="3" height="1" fill="#80775f"/>
<rect x="16" y="312.94" width="3" height="1" fill="#80775f"/>
<rect x="16" y="316.72" width="3" height="1" fill="#80775f"/>
<rect x="12" y="320.50" width="7" height="1" fill="#80775f"/>
<rect x="16" y="324.28" width="3" height="1" fill="#80775f"/>
<rect x="16" y="328.06" width="3" height="1" fill="#80775f"/>
<rect x="16" y="331.84" width="3" height="1" fill="#80775f"/>
<rect x="16" y="335.62" width="3" height="1" fill="#80775f"/>
<rect x="9" y="339.40" width="10" height="1" fill="#80775f"/>
<text x="0" y="0" transform="translate(6,339.90) rotate(-90)" font-family="Liberation Serif" font-size="13" fill="#80775f" stroke="#80775f" stroke-width="0.3" text-anchor="middle" dominant-baseline="central">9</text>
<rect x="16" y="343.18" width="3" height="1" fill="#80775f"/>
<rect x="16" y="346.96" width="3" height="1" fill="#80775f"/>
<rect x="16" y="350.74" width="3" height="1" fill="#80775f"/>
<rect x="16" y="354.52" width="3" height="1" fill="#80775f"/>
<rect x="12" y="358.30" width="7" height="1" fill="#80775f"/>
<rect x="16" y="362.08" width="3" height="1" fill="#80775f"/>
<rect x="16" y="365.86" width="3" height="1" fill="#80775f"/>
<rect x="16" y="369.64" width="3" height="1" fill="#80775f"/>
<rect x="16" y="373.42" width="3" height="1" fill="#80775f"/>
<rect x="9" y="377.20" width="10" height="1" fill="#80775f"/>
<text x="0" y="0" transform="translate(6,377.70) rotate(-90)" font-family="Liberation Serif" font-size="13" fill="#80775f" stroke="#80775f" stroke-width="0.3" text-anchor="middle" dominant-baseline="central">10</text>
<rect x="16" y="380.98" width="3" height="1" fill="#80775f"/>
<rect x="16" y="384.76" width="3" height="1" fill="#80775f"/>
<rect x="16" y="388.54" width="3" height="1" fill="#80775f"/>
<rect x="16" y="392.32" width="3" height="1" fill="#80775f"/>
<rect x="12" y="396.10" width="7" height="1" fill="#80775f"/>
<rect x="16" y="399.88" width="3" height="1" fill="#80775f"/>
<rect x="16" y="403.66" width="3" height="1" fill="#80775f"/>
<rect x="16" y="407.44" width="3" height="1" fill="#80775f"/>
<rect x="16" y="411.22" width="3" height="1" fill="#80775f"/>
<rect x="9" y="415.00" width="10" height="1" fill="#80775f"/>
<text x="0" y="0" transform="translate(6,415.50) rotate(-90)" font-family="Liberation Serif" font-size="13" fill="#80775f" stroke="#80775f" stroke-width="0.3" text-anchor="middle" dominant-baseline="central">11</text>
<rect x="16" y="418.78" width="3" height="1" fill="#80775f"/>
<rect x="16" y="422.56" width="3" height="1" fill="#80775f"/>
<rect x="16" y="426.34" width="3" height="1" fill="#80775f"/>
<rect x="16" y="430.12" width="3" height="1" fill="#80775f"/>
<rect x="12" y="433.90" width="7" height="1" fill="#80775f"/>
<rect x="16" y="437.68" width="3" height="1" fill="#80775f"/>
<rect x="16" y="441.46" width="3" height="1" fill="#80775f"/>
<rect x="16" y="445.24" width="3" height="1" fill="#80775f"/>
<rect x="16" y="449.02" width="3" height="1" fill="#80775f"/>
<rect x="9" y="452.80" width="10" height="1" fill="#80775f"/>
<text x="0" y="0" transform="translate(6,453.30) rotate(-90)" font-family="Liberation Serif" font-size="13" fill="#80775f" stroke="#80775f" stroke-width="0.3" text-anchor="middle" dominant-baseline="central">12</text>
<rect x="16" y="456.58" width="3" height="1" fill="#80775f"/>
<rect x="16" y="460.36" width="3" height="1" fill="#80775f"/>
<rect x="16" y="464.14" width="3" height="1" fill="#80775f"/>
<rect x="16" y="467.92" width="3" height="1" fill="#80775f"/>
<rect x="12" y="471.70" width="7" height="1" fill="#80775f"/>
<rect x="16" y="475.48" width="3" height="1" fill="#80775f"/>
<rect x="16" y="479.26" width="3" height="1" fill="#80775f"/>
<rect x="16" y="483.04" width="3" height="1" fill="#80775f"/>
<rect x="16" y="486.82" width="3" height="1" fill="#80775f"/>
<rect x="9" y="490.60" width="10" height="1" fill="#80775f"/>
<text x="0" y="0" transform="translate(6,491.10) rotate(-90)" font-family="Liberation Serif" font-size="13" fill="#80775f" stroke="#80775f" stroke-width="0.3" text-anchor="middle" dominant-baseline="central">13</text>
<rect x="16" y="494.38" width="3" height="1" fill="#80775f"/>
<rect x="16" y="498.16" width="3" height="1" fill="#80775f"/>
<rect x="16" y="501.94" width="3" height="1" fill="#80775f"/>
<rect x="16" y="505.72" width="3" height="1" fill="#80775f"/>
<rect x="12" y="509.50" width="7" height="1" fill="#80775f"/>
<rect x="16" y="513.28" width="3" height="1" fill="#80775f"/>
<rect x="16" y="517.06" width="3" height="1" fill="#80775f"/>
<rect x="16" y="520.84" width="3" height="1" fill="#80775f"/>
<rect x="16" y="524.62" width="3" height="1" fill="#80775f"/>
<rect x="9" y="528.40" width="10" height="1" fill="#80775f"/>
<text x="0" y="0" transform="translate(6,528.90) rotate(-90)" font-family="Liberation Serif" font-size="13" fill="#80775f" stroke="#80775f" stroke-width="0.3" text-anchor="middle" dominant-baseline="central">14</text>
<rect x="16" y="532.18" width="3" height="1" fill="#80775f"/>
<rect x="16" y="535.96" width="3" height="1" fill="#80775f"/>
<line x1="1" y1="30.5" x2="19" y2="30.5" stroke="#e46a50" stroke-width="1" stroke-dasharray="2.5,2"/>
<line x1="1" y1="336.5" x2="19" y2="336.5" stroke="#e46a50" stroke-width="1" stroke-dasharray="2.5,2"/>
</svg>
<div class="a" style="left:980px;top:116px;width:1px;height:538px;background:#a83232"></div>
<div class="a" style="left:981px;top:116px;width:1px;height:538px;background:#eab8bc"></div>
<div class="a" style="left:100px;top:144px;width:751px;height:311px;background:#c4d4ee;border-radius:2px"></div>
<div class="a" style="left:103px;top:146px;width:746px;height:307px;background:#fff;border:1px solid #4f6b9c;border-radius:1px"></div>
<div class="a" style="left:104px;top:209px;width:744px;height:1px;background:#6f8cba"></div>
<div class="a" style="left:104px;top:267px;width:744px;height:1px;background:#6f8cba"></div>
<div class="a" style="left:104px;top:344px;width:605px;height:1px;background:#6f8cba"></div>
<div class="a" style="left:787px;top:344px;width:61px;height:1px;background:#6f8cba"></div>
<div class="a" style="left:104px;top:425px;width:744px;height:1px;background:#6f8cba"></div>
<div class="t" style="left:428px;top:165.0px;font-size:24px;line-height:28px;color:#ede5e5;">页眉区域</div>
<div class="t" style="left:428px;top:223.0px;font-size:24px;line-height:28px;color:#ede5e5;">表头区域</div>
<div class="t" style="left:428px;top:293.0px;font-size:24px;line-height:28px;color:#ede5e5;">表体区域</div>
<div class="t" style="left:428px;top:371.0px;font-size:24px;line-height:28px;color:#ede5e5;">表尾区域</div>
<div class="t" style="left:428px;top:424.0px;font-size:24px;line-height:28px;color:#ede5e5;">页脚区域</div>
<div class="t" style="left:123px;top:180.0px;font-size:24px;line-height:28px;color:#4a4a4a;">畅捷通打印模板&nbsp;&nbsp;销货单</div>
<div class="t" style="left:103px;top:220.0px;font-size:14px;line-height:16px;color:#222;">客&ensp;户：</div>
<div class="t" style="left:164px;top:220.0px;font-size:14px;line-height:16px;color:#222;"><span class="m">[=</span>销货单<span class="m">.</span>客户<span class="m">·</span>往来单位名称<span class="m">]</span></div>
<div class="t" style="left:103px;top:245.0px;font-size:14px;line-height:16px;color:#222;">地&ensp;址：</div>
<div class="t" style="left:164px;top:245.0px;font-size:14px;line-height:16px;color:#222;"><span class="m">[=</span>销货单<span class="m">.</span>客户地址－联系人<span class="m">]</span></div>
<div class="t" style="left:649px;top:220.0px;font-size:14px;line-height:16px;color:#222;">日&ensp;期</div>
<div class="t" style="left:697px;top:220.0px;font-size:14px;line-height:16px;color:#222;"><span class="m">[=</span>销货单<span class="m">.</span>单据日期<span class="m">]</span></div>
<div class="t" style="left:649px;top:246.0px;font-size:14px;line-height:16px;color:#222;">单&ensp;号</div>
<div class="t" style="left:697px;top:246.0px;font-size:14px;line-height:16px;color:#222;"><span class="m">[=</span>销货单<span class="m">.</span>单据编号<span class="m">]</span></div>
<div class="a" style="left:107px;top:270px;width:704px;height:65px;background:#fff"></div>
<svg style="left:0;top:0" width="1" height="1" viewBox="0 0 1 1" overflow="visible"><rect x="106" y="269" width="706.3" height="1" fill="#86a2cc"/><rect x="106" y="291" width="706.3" height="1" fill="#86a2cc"/><rect x="106" y="312" width="706.3" height="1" fill="#86a2cc"/><rect x="106" y="335" width="706.3" height="1" fill="#86a2cc"/><rect x="106" y="269" width="1" height="67" fill="#86a2cc"/><rect x="141" y="269" width="1" height="67" fill="#86a2cc"/><rect x="188.6" y="269" width="1" height="67" fill="#86a2cc"/><rect x="420.7" y="269" width="1" height="44" fill="#86a2cc"/><rect x="481.3" y="269" width="1" height="44" fill="#86a2cc"/><rect x="540.4" y="269" width="1" height="44" fill="#86a2cc"/><rect x="604.5" y="269" width="1" height="44" fill="#86a2cc"/><rect x="671.2" y="269" width="1" height="44" fill="#86a2cc"/><rect x="723.4" y="269" width="1" height="67" fill="#86a2cc"/><rect x="811.3" y="269" width="1" height="67" fill="#86a2cc"/></svg>
<div class="a" style="left:107px;top:272px;width:34.0px;height:16px;overflow:hidden"><div class="t" style="left:0px;top:0;width:34.0px;font-size:14px;line-height:16px;color:#222;text-align:center">序号</div></div>
<div class="a" style="left:142px;top:272px;width:46.6px;height:16px;overflow:hidden"><div class="t" style="left:0px;top:0;width:46.6px;font-size:14px;line-height:16px;color:#222;text-align:center">编码</div></div>
<div class="a" style="left:189.6px;top:272px;width:231.1px;height:16px;overflow:hidden"><div class="t" style="left:0px;top:0;width:231.1px;font-size:14px;line-height:16px;color:#222;text-align:center">商品名称</div></div>
<div class="a" style="left:421.7px;top:272px;width:59.6px;height:16px;overflow:hidden"><div class="t" style="left:0px;top:0;width:59.6px;font-size:14px;line-height:16px;color:#222;text-align:center">商品规格</div></div>
<div class="a" style="left:482.3px;top:272px;width:58.1px;height:16px;overflow:hidden"><div class="t" style="left:0px;top:0;width:58.1px;font-size:14px;line-height:16px;color:#222;text-align:center">单位</div></div>
<div class="a" style="left:541.4px;top:272px;width:63.1px;height:16px;overflow:hidden"><div class="t" style="left:0px;top:0;width:63.1px;font-size:14px;line-height:16px;color:#222;text-align:center">数量</div></div>
<div class="a" style="left:605.5px;top:272px;width:65.7px;height:16px;overflow:hidden"><div class="t" style="left:0px;top:0;width:65.7px;font-size:14px;line-height:16px;color:#222;text-align:center">包装数量</div></div>
<div class="a" style="left:672.2px;top:272px;width:51.2px;height:16px;overflow:hidden"><div class="t" style="left:0px;top:0;width:51.2px;font-size:14px;line-height:16px;color:#222;text-align:center">单价</div></div>
<div class="a" style="left:724.4px;top:272px;width:86.9px;height:16px;overflow:hidden"><div class="t" style="left:0px;top:0;width:86.9px;font-size:14px;line-height:16px;color:#222;text-align:center">金额</div></div>
<div class="a" style="left:107px;top:293.5px;width:34.0px;height:16px;overflow:hidden"><div class="t" style="left:0px;top:0;width:34.0px;font-size:14px;line-height:16px;color:#222;text-align:right">文变量</div></div>
<div class="a" style="left:142px;top:293.5px;width:46.6px;height:16px;overflow:hidden"><div class="t" style="left:2px;top:0;width:46.6px;font-size:14px;line-height:16px;color:#222;text-align:left"><span class="m">=[</span>销货</div></div>
<div class="a" style="left:189.6px;top:293.5px;width:231.1px;height:16px;overflow:hidden"><div class="t" style="left:2px;top:0;width:231.1px;font-size:14px;line-height:16px;color:#222;text-align:left"><span class="m">=[</span>销货单明细<span class="m">.</span>商品<span class="m">·</span>商品名称<span class="m">]</span></div></div>
<div class="a" style="left:421.7px;top:293.5px;width:59.6px;height:16px;overflow:hidden"><div class="t" style="left:1px;top:0;width:59.6px;font-size:14px;line-height:16px;color:#222;text-align:left"><span class="m">=[</span>销货单<span class="m">|</span></div></div>
<div class="a" style="left:482.3px;top:293.5px;width:58.1px;height:16px;overflow:hidden"><div class="t" style="left:-2px;top:0;width:58.1px;font-size:14px;line-height:16px;color:#222;text-align:left"><span class="m">]</span>细<span class="m">.</span>销售单</div></div>
<div class="a" style="left:541.4px;top:293.5px;width:63.1px;height:16px;overflow:hidden"><div class="t" style="left:-2px;top:0;width:63.1px;font-size:14px;line-height:16px;color:#222;text-align:left"><span class="m">]</span>细<span class="m">.</span>数量<span class="m">]</span></div></div>
<div class="a" style="left:605.5px;top:293.5px;width:65.7px;height:16px;overflow:hidden"><div class="t" style="left:3px;top:0;width:65.7px;font-size:14px;line-height:16px;color:#222;text-align:left">包装数量<span class="m">]</span></div></div>
<div class="a" style="left:672.2px;top:293.5px;width:51.2px;height:16px;overflow:hidden"><div class="t" style="left:0px;top:0;width:51.2px;font-size:14px;line-height:16px;color:#222;text-align:left"><span class="m">I.</span>单价<span class="m">]</span></div></div>
<div class="a" style="left:724.4px;top:293.5px;width:86.9px;height:16px;overflow:hidden"><div class="t" style="left:-2px;top:0;width:86.9px;font-size:14px;line-height:16px;color:#222;text-align:left"><span class="m">(</span>单明细<span class="m">.</span>金额<span class="m">]</span></div></div>
<div class="a" style="left:189.6px;top:315.5px;width:533.8px;height:16px;overflow:hidden"><div class="t" style="left:2px;top:0;width:533.8px;font-size:14px;line-height:16px;color:#222;text-align:left">合计</div></div>
<div class="a" style="left:724.4px;top:315.5px;width:86.9px;height:16px;overflow:hidden"><div class="t" style="left:2px;top:0;width:86.9px;font-size:14px;line-height:16px;color:#222;text-align:left"><span class="m">=[SUM(</span>销货单<span class="m">|</span></div></div>
<div class="t" style="left:106px;top:343.5px;font-size:14px;line-height:16px;color:#222;">地址：北京市海淀区北清路<span class="m">68</span>号用友软件园<span class="m"> </span>联系电话：<span class="m">18910888292</span></div>
<div class="t" style="left:106px;top:368.0px;font-size:14px;line-height:16px;color:#222;">银行账号：<span class="m">XXXXXXXXXXX</span></div>
<div class="t" style="left:106px;top:391.0px;font-size:14px;line-height:16px;color:#222;">银行账号：<span class="m">XXXXXXXXXXXXXXXX</span></div>
<div class="t" style="left:637px;top:342.0px;font-size:14px;line-height:16px;color:#222;">扫我进店</div>
<svg width="71" height="71" viewBox="0 0 21 21" shape-rendering="crispEdges" style="position:absolute;left:712px;top:347px">
<path d="M0,0h7v7h-7z M1,1v5h5v-5z" fill="#000" fill-rule="evenodd"/>
<rect x="2" y="2" width="3" height="3" fill="#000"/>
<path d="M14,0h7v7h-7z M15,1v5h5v-5z" fill="#000" fill-rule="evenodd"/>
<rect x="16" y="2" width="3" height="3" fill="#000"/>
<path d="M0,14h7v7h-7z M1,15v5h5v-5z" fill="#000" fill-rule="evenodd"/>
<rect x="2" y="16" width="3" height="3" fill="#000"/>
<path d="M8,0h1v1h-1zM12,0h1v1h-1zM8,1h1v1h-1zM9,1h1v1h-1zM10,1h1v1h-1zM11,1h1v1h-1zM12,1h1v1h-1zM8,2h1v1h-1zM9,2h1v1h-1zM9,4h1v1h-1zM11,4h1v1h-1zM8,5h1v1h-1zM9,5h1v1h-1zM12,5h1v1h-1zM8,6h1v1h-1zM10,6h1v1h-1zM12,6h1v1h-1zM8,7h1v1h-1zM9,7h1v1h-1zM11,7h1v1h-1zM2,8h1v1h-1zM3,8h1v1h-1zM4,8h1v1h-1zM6,8h1v1h-1zM8,8h1v1h-1zM10,8h1v1h-1zM13,8h1v1h-1zM14,8h1v1h-1zM15,8h1v1h-1zM18,8h1v1h-1zM19,8h1v1h-1zM20,8h1v1h-1zM0,9h1v1h-1zM1,9h1v1h-1zM3,9h1v1h-1zM4,9h1v1h-1zM5,9h1v1h-1zM8,9h1v1h-1zM11,9h1v1h-1zM13,9h1v1h-1zM14,9h1v1h-1zM15,9h1v1h-1zM17,9h1v1h-1zM18,9h1v1h-1zM20,9h1v1h-1zM0,10h1v1h-1zM1,10h1v1h-1zM6,10h1v1h-1zM9,10h1v1h-1zM10,10h1v1h-1zM12,10h1v1h-1zM13,10h1v1h-1zM16,10h1v1h-1zM17,10h1v1h-1zM18,10h1v1h-1zM19,10h1v1h-1zM2,11h1v1h-1zM3,11h1v1h-1zM7,11h1v1h-1zM8,11h1v1h-1zM9,11h1v1h-1zM13,11h1v1h-1zM15,11h1v1h-1zM16,11h1v1h-1zM17,11h1v1h-1zM18,11h1v1h-1zM0,12h1v1h-1zM1,12h1v1h-1zM2,12h1v1h-1zM3,12h1v1h-1zM4,12h1v1h-1zM5,12h1v1h-1zM6,12h1v1h-1zM14,12h1v1h-1zM16,12h1v1h-1zM17,12h1v1h-1zM19,12h1v1h-1zM8,13h1v1h-1zM10,13h1v1h-1zM13,13h1v1h-1zM18,13h1v1h-1zM19,13h1v1h-1zM20,13h1v1h-1zM14,14h1v1h-1zM15,14h1v1h-1zM17,14h1v1h-1zM19,14h1v1h-1zM9,15h1v1h-1zM10,15h1v1h-1zM11,15h1v1h-1zM13,15h1v1h-1zM14,15h1v1h-1zM17,15h1v1h-1zM18,15h1v1h-1zM8,16h1v1h-1zM9,16h1v1h-1zM11,16h1v1h-1zM15,16h1v1h-1zM17,16h1v1h-1zM19,16h1v1h-1zM8,17h1v1h-1zM9,17h1v1h-1zM11,17h1v1h-1zM12,17h1v1h-1zM13,17h1v1h-1zM14,17h1v1h-1zM15,17h1v1h-1zM17,17h1v1h-1zM18,17h1v1h-1zM8,18h1v1h-1zM9,18h1v1h-1zM10,18h1v1h-1zM12,18h1v1h-1zM13,18h1v1h-1zM14,18h1v1h-1zM16,18h1v1h-1zM17,18h1v1h-1zM18,18h1v1h-1zM9,19h1v1h-1zM10,19h1v1h-1zM12,19h1v1h-1zM14,19h1v1h-1zM15,19h1v1h-1zM16,19h1v1h-1zM18,19h1v1h-1zM9,20h1v1h-1zM13,20h1v1h-1zM16,20h1v1h-1zM18,20h1v1h-1zM19,20h1v1h-1z" fill="#000"/>
</svg>
<div class="a" style="left:1049px;top:96px;width:1px;height:558px;background:#9a9a9a"></div>
<div class="a" style="left:1050px;top:128px;width:242px;height:526px;background:#f2f2f2"></div>
<div class="a" style="left:1050px;top:128px;width:242px;height:46px;background:#fff"></div>
<div class="a" style="left:1050px;top:96px;width:299px;height:32px;background:#0f99a1"></div>
<div class="t" style="left:1060px;top:102.0px;font-size:16px;line-height:20px;color:#fff;-webkit-text-stroke:0.4px #fff">属性面板</div>
<svg style="left:1319px;top:105px" width="8" height="13" viewBox="0 0 8 13"><path d="M1,1l5.5,5.5l-5.5,5.5" fill="none" stroke="#fff" stroke-width="2"/></svg>
<div class="t" style="left:1060px;top:141.5px;font-size:16px;line-height:20px;color:#222;">打印模板</div>
<svg style="left:1252px;top:146.5px" width="16" height="10" viewBox="0 0 16 10"><path d="M1,9l7,-7l7,7" fill="none" stroke="#111" stroke-width="2"/></svg>
<div class="a" style="left:1292px;top:128px;width:7px;height:526px;background:#bdbdbd"></div>
<div class="a" style="left:1299px;top:128px;width:50px;height:526px;background:#fff"></div>
<div class="a" style="left:1299px;top:196px;width:50px;height:68px;background:#f2f2f2"></div>
<div class="t" style="left:1070px;top:196.5px;font-size:14px;line-height:18px;color:#3bbdc6;">名称</div>
<div class="t" style="left:1085px;top:233.5px;font-size:12px;line-height:16px;color:#444;">样表1</div>
<div class="a" style="left:1085px;top:256px;width:191px;height:1px;background:#d5d5d5"></div>
<div class="t" style="left:1070px;top:280.0px;font-size:14px;line-height:18px;color:#3bbdc6;">纸张类型</div>
<div class="t" style="left:1080.5px;top:317.5px;font-size:12px;line-height:16px;color:#333;">241 二等分</div>
<svg style="left:1258.5px;top:318px" width="13" height="8" viewBox="0 0 13 8"><path d="M0.7,0.7l5.8,6l5.8,-6" fill="none" stroke="#ef9a66" stroke-width="1.4"/></svg>
<div class="a" style="left:1080px;top:339px;width:196px;height:1px;background:#d5d5d5"></div>
<div class="t" style="left:1080.5px;top:342.0px;font-size:12px;line-height:16px;color:#555;">纸张尺寸</div>
<div class="t" style="left:1148px;top:342.0px;font-size:12px;line-height:16px;color:#555;letter-spacing:0.45px">241 x 140 mm</div>
<div class="t" style="left:1070px;top:390.5px;font-size:14px;line-height:18px;color:#3bbdc6;">打印模式</div>
<div class="t" style="left:1080px;top:428.5px;font-size:12px;line-height:16px;color:#555;">数据模板</div>
<div class="t" style="left:1170px;top:428.5px;font-size:12px;line-height:16px;color:#bbb;">选择...</div>
<svg style="left:1258.5px;top:429.5px" width="13" height="8" viewBox="0 0 13 8"><path d="M0.7,0.7l5.8,6l5.8,-6" fill="none" stroke="#ef9a66" stroke-width="1.4"/></svg>
<div class="a" style="left:1170px;top:450px;width:106px;height:1px;background:#d5d5d5"></div>
<div class="t" style="left:1080px;top:469.0px;font-size:12px;line-height:16px;color:#555;">每页打印表头</div><div class="t" style="left:1170.5px;top:469.0px;font-size:12px;line-height:16px;color:#333;">否</div><div class="a" style="left:1186.5px;top:467px;width:40px;height:20px;border-radius:10px;background:#cdcdcd"></div><div class="a" style="left:1190px;top:470px;width:13.5px;height:13.5px;border-radius:7px;background:#fff"></div><div class="t" style="left:1232px;top:469.0px;font-size:12px;line-height:16px;color:#333;">是</div>
<div class="t" style="left:1080px;top:511.0px;font-size:12px;line-height:16px;color:#555;">每页打印表尾</div><div class="t" style="left:1170.5px;top:511.0px;font-size:12px;line-height:16px;color:#333;">否</div><div class="a" style="left:1186.5px;top:509px;width:40px;height:20px;border-radius:10px;background:#cdcdcd"></div><div class="a" style="left:1190px;top:512px;width:13.5px;height:13.5px;border-radius:7px;background:#fff"></div><div class="t" style="left:1232px;top:511.0px;font-size:12px;line-height:16px;color:#333;">是</div>
<div class="t" style="left:1070px;top:557.0px;font-size:14px;line-height:18px;color:#3bbdc6;">边距</div>
<div class="t" style="left:1080px;top:595.0px;font-size:12px;line-height:16px;color:#555;">上</div><div class="t" style="left:1120.5px;top:595.0px;font-size:12px;line-height:16px;color:#333;">30</div><svg style="left:1194.5px;top:594px" width="10" height="17" viewBox="0 0 10 17"><path d="M0,5L5,0.5L10,5z M0,12L5,16.5L10,12z" fill="#aaa"/></svg><div class="t" style="left:1217px;top:596.0px;font-size:12px;line-height:16px;color:#333;">像素</div><svg style="left:1258.5px;top:595.5px" width="13" height="8" viewBox="0 0 13 8"><path d="M0.7,0.7l5.8,6l5.8,-6" fill="none" stroke="#ef9a66" stroke-width="1.4"/></svg>
<div class="a" style="left:1119.5px;top:617px;width:88px;height:1px;background:#d5d5d5"></div>
<div class="a" style="left:1216px;top:617px;width:61px;height:1px;background:#d5d5d5"></div>
<div class="t" style="left:1080px;top:637.0px;font-size:12px;line-height:16px;color:#555;">右</div><div class="t" style="left:1120.5px;top:637.0px;font-size:12px;line-height:16px;color:#333;">30</div><svg style="left:1194.5px;top:636px" width="10" height="17" viewBox="0 0 10 17"><path d="M0,5L5,0.5L10,5z M0,12L5,16.5L10,12z" fill="#aaa"/></svg><div class="t" style="left:1217px;top:638.0px;font-size:12px;line-height:16px;color:#333;">像素</div><svg style="left:1258.5px;top:637.5px" width="13" height="8" viewBox="0 0 13 8"><path d="M0.7,0.7l5.8,6l5.8,-6" fill="none" stroke="#ef9a66" stroke-width="1.4"/></svg>
<div class="a" style="left:1306.5px;top:133.7px;width:34px;height:34px;border-radius:17px;background:#d6d6d6"></div>
<div class="t" style="left:1299px;top:172.8px;width:50px;text-align:center;font-size:12px;line-height:16px;color:#969696;letter-spacing:-0.5px">纸张设置</div>
<div class="a" style="left:1306.5px;top:201.75px;width:34px;height:34px;border-radius:17px;background:#14a6ae"></div>
<div class="t" style="left:1299px;top:240px;width:50px;text-align:center;font-size:12px;line-height:16px;color:#2bb0bb;letter-spacing:-0.5px">属性</div>
<div class="a" style="left:1306.5px;top:269.6px;width:34px;height:34px;border-radius:17px;background:#d6d6d6"></div>
<div class="t" style="left:1299px;top:308px;width:50px;text-align:center;font-size:12px;line-height:16px;color:#969696;letter-spacing:-0.5px">数据源</div>
<div class="a" style="left:1306.5px;top:337.7px;width:34px;height:34px;border-radius:17px;background:#d6d6d6"></div>
<div class="t" style="left:1299px;top:377px;width:50px;text-align:center;font-size:12px;line-height:16px;color:#969696;letter-spacing:-0.5px">元素布局</div>
<div class="a" style="left:1306.5px;top:405.5px;width:34px;height:34px;border-radius:17px;background:#d6d6d6"></div>
<div class="t" style="left:1299px;top:444.2px;width:50px;text-align:center;font-size:12px;line-height:16px;color:#969696;letter-spacing:-0.5px">打印设置</div>
<svg style="left:0;top:0" width="1" height="1" overflow="visible"><rect x="1316" y="144.7" width="15" height="12" fill="none" stroke="#fff" stroke-width="1.4"/><path d="M1316,147.7h15" stroke="#fff" stroke-width="1.2"/><rect x="1319" y="150.2" width="9" height="4" fill="none" stroke="#fff" stroke-width="1.2"/><rect x="1316" y="212.75" width="15" height="12" fill="none" stroke="#fff" stroke-width="1.4"/><path d="M1316,215.75h15" stroke="#fff" stroke-width="1.2"/><rect x="1319" y="218.25" width="9" height="4" fill="none" stroke="#fff" stroke-width="1.2"/><rect x="1314.5" y="278.6" width="18" height="13" fill="none" stroke="#fff" stroke-width="1.5"/><path d="M1323.5,291.6v3M1318,295.1h11" stroke="#fff" stroke-width="1.5"/><path d="M1318.5,288.6v-3M1321.5,288.6v-5M1324.5,288.6v-4M1327.5,288.6v-6" stroke="#fff" stroke-width="1.6"/><rect x="1316.2" y="347.4" width="5.6" height="5.6" fill="none" stroke="#fff" stroke-width="1.5"/><rect x="1316.2" y="356.4" width="5.6" height="5.6" fill="none" stroke="#fff" stroke-width="1.5"/><rect x="1325.2" y="347.4" width="5.6" height="5.6" fill="none" stroke="#fff" stroke-width="1.5"/><rect x="1325.2" y="356.4" width="5.6" height="5.6" fill="none" stroke="#fff" stroke-width="1.5"/><polygon points="1332.33,424.26 1329.15,426.28 1328.50,429.98 1324.83,429.17 1321.74,431.33 1319.72,428.15 1316.02,427.50 1316.83,423.83 1314.67,420.74 1317.85,418.72 1318.50,415.02 1322.17,415.83 1325.26,413.67 1327.28,416.85 1330.98,417.50 1330.17,421.17" fill="none" stroke="#fff" stroke-width="1.4" stroke-linejoin="round"/><circle cx="1323.5" cy="422.5" r="3" fill="none" stroke="#fff" stroke-width="1.4"/></svg>
<div class="wm" style="left:30.8px;top:21.1px">电话<span style="margin:0 9px 0 3px">:</span><span class="wd">400-665-0028</span></div><div class="wm" style="left:30.8px;top:50.1px">网址<span style="margin:0 9px 0 3px">:</span><span class="ww">www.chanjet.net</span></div><div class="wm" style="left:301.8px;top:21.1px">电话<span style="margin:0 9px 0 3px">:</span><span class="wd">400-665-0028</span></div><div class="wm" style="left:301.8px;top:50.1px">网址<span style="margin:0 9px 0 3px">:</span><span class="ww">www.chanjet.net</span></div><div class="wm" style="left:572.8px;top:21.1px">电话<span style="margin:0 9px 0 3px">:</span><span class="wd">400-665-0028</span></div><div class="wm" style="left:572.8px;top:50.1px">网址<span style="margin:0 9px 0 3px">:</span><span class="ww">www.chanjet.net</span></div><div class="wm" style="left:843.8px;top:21.1px">电话<span style="margin:0 9px 0 3px">:</span><span class="wd">400-665-0028</span></div><div class="wm" style="left:843.8px;top:50.1px">网址<span style="margin:0 9px 0 3px">:</span><span class="ww">www.chanjet.net</span></div><div class="wm" style="left:1114.8px;top:21.1px">电话<span style="margin:0 9px 0 3px">:</span><span class="wd">400-665-0028</span></div><div class="wm" style="left:1114.8px;top:50.1px">网址<span style="margin:0 9px 0 3px">:</span><span class="ww">www.chanjet.net</span></div><div class="wm" style="left:1385.8px;top:21.1px">电话<span style="margin:0 9px 0 3px">:</span><span class="wd">400-665-0028</span></div><div class="wm" style="left:1385.8px;top:50.1px">网址<span style="margin:0 9px 0 3px">:</span><span class="ww">www.chanjet.net</span></div><div class="wm" style="left:30.8px;top:131.1px">电话<span style="margin:0 9px 0 3px">:</span><span class="wd">400-665-0028</span></div><div class="wm" style="left:30.8px;top:160.1px">网址<span style="margin:0 9px 0 3px">:</span><span class="ww">www.chanjet.net</span></div><div class="wm" style="left:301.8px;top:131.1px">电话<span style="margin:0 9px 0 3px">:</span><span class="wd">400-665-0028</span></div><div class="wm" style="left:301.8px;top:160.1px">网址<span style="margin:0 9px 0 3px">:</span><span class="ww">www.chanjet.net</span></div><div class="wm" style="left:572.8px;top:131.1px">电话<span style="margin:0 9px 0 3px">:</span><span class="wd">400-665-0028</span></div><div class="wm" style="left:572.8px;top:160.1px">网址<span style="margin:0 9px 0 3px">:</span><span class="ww">www.chanjet.net</span></div><div class="wm" style="left:843.8px;top:131.1px">电话<span style="margin:0 9px 0 3px">:</span><span class="wd">400-665-0028</span></div><div class="wm" style="left:843.8px;top:160.1px">网址<span style="margin:0 9px 0 3px">:</span><span class="ww">www.chanjet.net</span></div><div class="wm" style="left:1114.8px;top:131.1px">电话<span style="margin:0 9px 0 3px">:</span><span class="wd">400-665-0028</span></div><div class="wm" style="left:1114.8px;top:160.1px">网址<span style="margin:0 9px 0 3px">:</span><span class="ww">www.chanjet.net</span></div><div class="wm" style="left:1385.8px;top:131.1px">电话<span style="margin:0 9px 0 3px">:</span><span class="wd">400-665-0028</span></div><div class="wm" style="left:1385.8px;top:160.1px">网址<span style="margin:0 9px 0 3px">:</span><span class="ww">www.chanjet.net</span></div><div class="wm" style="left:30.8px;top:241.1px">电话<span style="margin:0 9px 0 3px">:</span><span class="wd">400-665-0028</span></div><div class="wm" style="left:30.8px;top:270.1px">网址<span style="margin:0 9px 0 3px">:</span><span class="ww">www.chanjet.net</span></div><div class="wm" style="left:301.8px;top:241.1px">电话<span style="margin:0 9px 0 3px">:</span><span class="wd">400-665-0028</span></div><div class="wm" style="left:301.8px;top:270.1px">网址<span style="margin:0 9px 0 3px">:</span><span class="ww">www.chanjet.net</span></div><div class="wm" style="left:572.8px;top:241.1px">电话<span style="margin:0 9px 0 3px">:</span><span class="wd">400-665-0028</span></div><div class="wm" style="left:572.8px;top:270.1px">网址<span style="margin:0 9px 0 3px">:</span><span class="ww">www.chanjet.net</span></div><div class="wm" style="left:843.8px;top:241.1px">电话<span style="margin:0 9px 0 3px">:</span><span class="wd">400-665-0028</span></div><div class="wm" style="left:843.8px;top:270.1px">网址<span style="margin:0 9px 0 3px">:</span><span class="ww">www.chanjet.net</span></div><div class="wm" style="left:1114.8px;top:241.1px">电话<span style="margin:0 9px 0 3px">:</span><span class="wd">400-665-0028</span></div><div class="wm" style="left:1114.8px;top:270.1px">网址<span style="margin:0 9px 0 3px">:</span><span class="ww">www.chanjet.net</span></div><div class="wm" style="left:1385.8px;top:241.1px">电话<span style="margin:0 9px 0 3px">:</span><span class="wd">400-665-0028</span></div><div class="wm" style="left:1385.8px;top:270.1px">网址<span style="margin:0 9px 0 3px">:</span><span class="ww">www.chanjet.net</span></div><div class="wm" style="left:30.8px;top:351.1px">电话<span style="margin:0 9px 0 3px">:</span><span class="wd">400-665-0028</span></div><div class="wm" style="left:30.8px;top:380.1px">网址<span style="margin:0 9px 0 3px">:</span><span class="ww">www.chanjet.net</span></div><div class="wm" style="left:301.8px;top:351.1px">电话<span style="margin:0 9px 0 3px">:</span><span class="wd">400-665-0028</span></div><div class="wm" style="left:301.8px;top:380.1px">网址<span style="margin:0 9px 0 3px">:</span><span class="ww">www.chanjet.net</span></div><div class="wm" style="left:572.8px;top:351.1px">电话<span style="margin:0 9px 0 3px">:</span><span class="wd">400-665-0028</span></div><div class="wm" style="left:572.8px;top:380.1px">网址<span style="margin:0 9px 0 3px">:</span><span class="ww">www.chanjet.net</span></div><div class="wm" style="left:843.8px;top:351.1px">电话<span style="margin:0 9px 0 3px">:</span><span class="wd">400-665-0028</span></div><div class="wm" style="left:843.8px;top:380.1px">网址<span style="margin:0 9px 0 3px">:</span><span class="ww">www.chanjet.net</span></div><div class="wm" style="left:1114.8px;top:351.1px">电话<span style="margin:0 9px 0 3px">:</span><span class="wd">400-665-0028</span></div><div class="wm" style="left:1114.8px;top:380.1px">网址<span style="margin:0 9px 0 3px">:</span><span class="ww">www.chanjet.net</span></div><div class="wm" style="left:1385.8px;top:351.1px">电话<span style="margin:0 9px 0 3px">:</span><span class="wd">400-665-0028</span></div><div class="wm" style="left:1385.8px;top:380.1px">网址<span style="margin:0 9px 0 3px">:</span><span class="ww">www.chanjet.net</span></div><div class="wm" style="left:30.8px;top:461.1px">电话<span style="margin:0 9px 0 3px">:</span><span class="wd">400-665-0028</span></div><div class="wm" style="left:30.8px;top:490.1px">网址<span style="margin:0 9px 0 3px">:</span><span class="ww">www.chanjet.net</span></div><div class="wm" style="left:301.8px;top:461.1px">电话<span style="margin:0 9px 0 3px">:</span><span class="wd">400-665-0028</span></div><div class="wm" style="left:301.8px;top:490.1px">网址<span style="margin:0 9px 0 3px">:</span><span class="ww">www.chanjet.net</span></div><div class="wm" style="left:572.8px;top:461.1px">电话<span style="margin:0 9px 0 3px">:</span><span class="wd">400-665-0028</span></div><div class="wm" style="left:572.8px;top:490.1px">网址<span style="margin:0 9px 0 3px">:</span><span class="ww">www.chanjet.net</span></div><div class="wm" style="left:843.8px;top:461.1px">电话<span style="margin:0 9px 0 3px">:</span><span class="wd">400-665-0028</span></div><div class="wm" style="left:843.8px;top:490.1px">网址<span style="margin:0 9px 0 3px">:</span><span class="ww">www.chanjet.net</span></div><div class="wm" style="left:1114.8px;top:461.1px">电话<span style="margin:0 9px 0 3px">:</span><span class="wd">400-665-0028</span></div><div class="wm" style="left:1114.8px;top:490.1px">网址<span style="margin:0 9px 0 3px">:</span><span class="ww">www.chanjet.net</span></div><div class="wm" style="left:1385.8px;top:461.1px">电话<span style="margin:0 9px 0 3px">:</span><span class="wd">400-665-0028</span></div><div class="wm" style="left:1385.8px;top:490.1px">网址<span style="margin:0 9px 0 3px">:</span><span class="ww">www.chanjet.net</span></div><div class="wm" style="left:30.8px;top:571.1px">电话<span style="margin:0 9px 0 3px">:</span><span class="wd">400-665-0028</span></div><div class="wm" style="left:30.8px;top:600.1px">网址<span style="margin:0 9px 0 3px">:</span><span class="ww">www.chanjet.net</span></div><div class="wm" style="left:301.8px;top:571.1px">电话<span style="margin:0 9px 0 3px">:</span><span class="wd">400-665-0028</span></div><div class="wm" style="left:301.8px;top:600.1px">网址<span style="margin:0 9px 0 3px">:</span><span class="ww">www.chanjet.net</span></div><div class="wm" style="left:572.8px;top:571.1px">电话<span style="margin:0 9px 0 3px">:</span><span class="wd">400-665-0028</span></div><div class="wm" style="left:572.8px;top:600.1px">网址<span style="margin:0 9px 0 3px">:</span><span class="ww">www.chanjet.net</span></div><div class="wm" style="left:843.8px;top:571.1px">电话<span style="margin:0 9px 0 3px">:</span><span class="wd">400-665-0028</span></div><div class="wm" style="left:843.8px;top:600.1px">网址<span style="margin:0 9px 0 3px">:</span><span class="ww">www.chanjet.net</span></div><div class="wm" style="left:1114.8px;top:571.1px">电话<span style="margin:0 9px 0 3px">:</span><span class="wd">400-665-0028</span></div><div class="wm" style="left:1114.8px;top:600.1px">网址<span style="margin:0 9px 0 3px">:</span><span class="ww">www.chanjet.net</span></div><div class="wm" style="left:1385.8px;top:571.1px">电话<span style="margin:0 9px 0 3px">:</span><span class="wd">400-665-0028</span></div><div class="wm" style="left:1385.8px;top:600.1px">网址<span style="margin:0 9px 0 3px">:</span><span class="ww">www.chanjet.net</span></div><div class="wm" style="left:30.8px;top:681.1px">电话<span style="margin:0 9px 0 3px">:</span><span class="wd">400-665-0028</span></div><div class="wm" style="left:30.8px;top:710.1px">网址<span style="margin:0 9px 0 3px">:</span><span class="ww">www.chanjet.net</span></div><div class="wm" style="left:301.8px;top:681.1px">电话<span style="margin:0 9px 0 3px">:</span><span class="wd">400-665-0028</span></div><div class="wm" style="left:301.8px;top:710.1px">网址<span style="margin:0 9px 0 3px">:</span><span class="ww">www.chanjet.net</span></div><div class="wm" style="left:572.8px;top:681.1px">电话<span style="margin:0 9px 0 3px">:</span><span class="wd">400-665-0028</span></div><div class="wm" style="left:572.8px;top:710.1px">网址<span style="margin:0 9px 0 3px">:</span><span class="ww">www.chanjet.net</span></div><div class="wm" style="left:843.8px;top:681.1px">电话<span style="margin:0 9px 0 3px">:</span><span class="wd">400-665-0028</span></div><div class="wm" style="left:843.8px;top:710.1px">网址<span style="margin:0 9px 0 3px">:</span><span class="ww">www.chanjet.net</span></div><div class="wm" style="left:1114.8px;top:681.1px">电话<span style="margin:0 9px 0 3px">:</span><span class="wd">400-665-0028</span></div><div class="wm" style="left:1114.8px;top:710.1px">网址<span style="margin:0 9px 0 3px">:</span><span class="ww">www.chanjet.net</span></div><div class="wm" style="left:1385.8px;top:681.1px">电话<span style="margin:0 9px 0 3px">:</span><span class="wd">400-665-0028</span></div><div class="wm" style="left:1385.8px;top:710.1px">网址<span style="margin:0 9px 0 3px">:</span><span class="ww">www.chanjet.net</span></div>
</body></html>
